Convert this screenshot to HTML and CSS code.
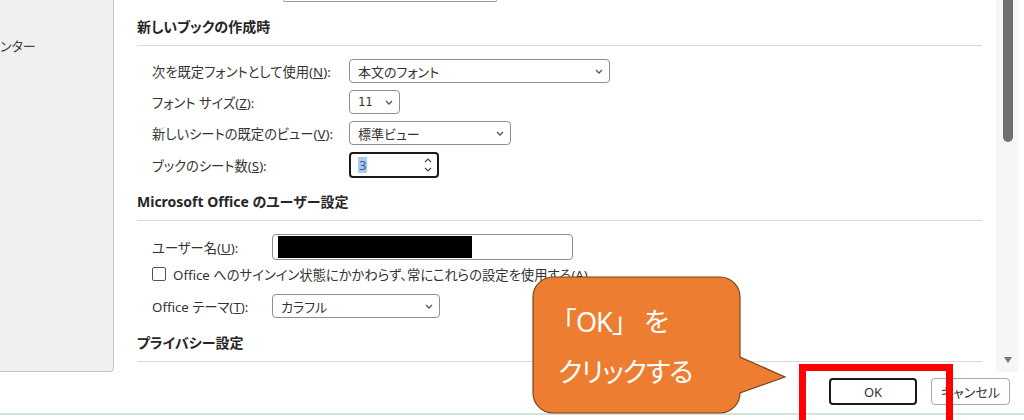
FILE: index.html
```html
<!DOCTYPE html>
<html lang="ja">
<head>
  <meta charset="UTF-8">
  <title>Excel のオプション</title>
  <link rel="stylesheet" href="styles.css">
</head>
<body>

  <!-- オプション画面 -->
  <div class="window">
    <aside class="nav">
      <div class="nav-item">ンター</div>
    </aside>

    <main class="content">
      <div class="prev-box"></div>

      <h3 class="section-title">新しいブックの作成時</h3>
      <div class="form form-book">
        <label class="label">次を既定フォントとして使用(<u>N</u>):</label>
        <div class="select w-font"><span>本文のフォント</span><svg class="chev" viewBox="0 0 8 5"><path d="M1 1l3 3 3-3"/></svg></div>

        <label class="label">フォント サイズ(<u>Z</u>):</label>
        <div class="select w-size"><span class="mono">11</span><svg class="chev" viewBox="0 0 8 5"><path d="M1 1l3 3 3-3"/></svg></div>

        <label class="label">新しいシートの既定のビュー(<u>V</u>):</label>
        <div class="select w-view"><span>標準ビュー</span><svg class="chev" viewBox="0 0 8 5"><path d="M1 1l3 3 3-3"/></svg></div>

        <label class="label">ブックのシート数(<u>S</u>):</label>
        <div class="spin">
          <span class="sel">3</span>
          <div class="spin-arrows">
            <svg viewBox="0 0 8 5"><path d="M1 4l3-3 3 3"/></svg>
            <svg viewBox="0 0 8 5"><path d="M1 1l3 3 3-3"/></svg>
          </div>
        </div>
      </div>

      <h3 class="section-title title-user">Microsoft Office のユーザー設定</h3>
      <div class="form form-user">
        <label class="label">ユーザー名(<u>U</u>):</label>
        <div class="textbox"><div class="redact"></div></div>

        <div class="check-row">
          <span class="checkbox"></span>
          <span>Office へのサインイン状態にかかわらず、常にこれらの設定を使用する(A)</span>
        </div>

        <label class="label row-theme">Office テーマ(<u>T</u>):</label>
        <div class="select w-theme row-theme"><span>カラフル</span><svg class="chev" viewBox="0 0 8 5"><path d="M1 1l3 3 3-3"/></svg></div>
      </div>

      <h3 class="section-title title-privacy">プライバシー設定</h3>
    </main>

    <div class="scrollbar">
      <div class="thumb"></div>
      <div class="arrow-down"></div>
    </div>
  </div>

  <div class="footer">
    <button class="btn btn-ok">OK</button>
    <button class="btn">キャンセル</button>
  </div>
  <div class="bottom-line"></div>

  <!-- 吹き出し -->
  <svg class="callout" width="260" height="142" viewBox="0 0 260 142">
    <path d="M21 1H188A20 20 0 0 1 208 21V81L253 101L208 117A20 20 0 0 1 188 137H21A20 20 0 0 1 1 117V21A20 20 0 0 1 21 1Z"/>
  </svg>
  <div class="callout-text"><span class="full">「OK」 を</span><br>クリックする</div>

  <div class="highlight"></div>

</body>
</html>
```

FILE: styles.css
```css
body {
  margin: 0;
  width: 1024px;
  height: 420px;
  overflow: hidden;
  position: relative;
  background: #fff;
  font-family: "Noto Sans", "Noto Sans CJK JP", sans-serif;
  font-feature-settings: "palt";
  font-size: 13px;
  color: #333;
}

/* ウィンドウ */
.window {
  display: flex;
  height: 372px;
}

.nav {
  width: 113px;
  height: 371px;
  background: #f0f0f0;
  border-right: 1px solid #c6c6c6;
  border-bottom: 1px solid #c6c6c6;
  border-bottom-right-radius: 4px;
  overflow: hidden;
}

.nav-item {
  margin-top: 36px;
  color: #444;
  white-space: nowrap;
}

.content {
  flex: 1;
  padding: 0 14px 0 23px;
  overflow: hidden;
}

.prev-box {
  margin-left: 146px;
  width: 212px;
  height: 1px;
  border: 1px solid #9a9a9a;
  border-top: none;
  border-radius: 0 0 4px 4px;
}

.section-title {
  margin: 15px 0 0;
  padding-bottom: 8px;
  border-bottom: 1px solid #d9d9d9;
  font-size: 14px;
  font-weight: bold;
  line-height: 20px;
  color: #262626;
}

.title-user { margin-top: 14px; }
.title-privacy { margin-top: 15px; }

/* フォーム */
.form {
  display: grid;
  align-items: center;
  padding-left: 15px;
  margin-top: 13px;
  row-gap: 7px;
}

.form-book { grid-template-columns: 197px auto; }
.form-user { grid-template-columns: 120px auto; row-gap: 5px; }

.label {
  white-space: nowrap;
  color: #333;
  font-size: 13.3px;
}

.select {
  display: flex;
  align-items: center;
  justify-content: space-between;
  box-sizing: border-box;
  height: 24px;
  padding: 0 6px 0 8px;
  border: 1px solid #8f8f8f;
  border-radius: 4px;
  background: #fff;
  color: #333;
}

.w-font { width: 261px; }
.w-size { width: 51px; }
.w-view { width: 162px; }
.w-theme { width: 168px; }

.mono {
  font-family: "DejaVu Sans Mono", monospace;
  font-size: 12px;
}

.chev {
  width: 8px;
  height: 5px;
  fill: none;
  stroke: #555;
  stroke-width: 1.3;
}

.spin {
  display: flex;
  align-items: center;
  justify-content: space-between;
  box-sizing: border-box;
  width: 90px;
  height: 26px;
  padding: 0 5px 0 7px;
  border: 2px solid #1a1a1a;
  border-radius: 4px;
}

.sel {
  background: #a9cdf0;
  color: #3a5a8a;
  padding: 0 1px;
  line-height: 16px;
}

.spin-arrows {
  display: flex;
  flex-direction: column;
  gap: 4px;
}

.spin-arrows svg {
  width: 8px;
  height: 5px;
  fill: none;
  stroke: #444;
  stroke-width: 1.2;
}

.textbox {
  box-sizing: border-box;
  width: 301px;
  height: 26px;
  padding: 1px 0 1px 5px;
  border: 1px solid #8f8f8f;
  border-radius: 4px;
}

.redact {
  width: 194px;
  height: 100%;
  background: #000;
}

.check-row {
  grid-column: 1 / 3;
  display: flex;
  align-items: center;
  gap: 7px;
  height: 18px;
  white-space: nowrap;
  font-size: 13.3px;
}

.checkbox {
  width: 12px;
  height: 12px;
  border: 1px solid #555;
  border-radius: 2px;
}

.row-theme { margin-top: 6px; }

/* スクロールバー */
.scrollbar {
  position: relative;
  width: 22px;
  margin-right: 6px;
  background: #f6f6f6;
}

.thumb {
  margin-left: 7px;
  width: 10px;
  height: 142px;
  background: #6f6f6f;
  border-radius: 0 0 5px 5px;
}

.arrow-down {
  position: absolute;
  left: 8px;
  top: 357px;
  border-left: 4px solid transparent;
  border-right: 4px solid transparent;
  border-top: 6px solid #7a7a7a;
}

/* ボタン */
.footer {
  display: flex;
  justify-content: flex-end;
  gap: 14px;
  height: 41px;
  padding: 6px 14px 0 0;
  box-sizing: border-box;
}

.btn {
  height: 27px;
  width: 79px;
  background: #fff;
  border: 1px solid #a8a8a8;
  border-radius: 4px;
  font-family: "Noto Sans", "Noto Sans CJK JP", sans-serif;
  font-feature-settings: "palt";
  font-size: 13px;
  color: #333;
}

.btn-ok {
  width: 88px;
  border: 2px solid #1a1a1a;
}

.bottom-line {
  height: 2px;
  background: #d3e5d9;
}

/* 注釈 */
.callout {
  position: absolute;
  left: 532px;
  top: 276px;
}

.callout path {
  fill: #ed7d31;
  stroke: #7d4418;
  stroke-width: 1.2;
}

.callout-text {
  position: absolute;
  left: 558px;
  top: 297px;
  color: #fff;
  font-size: 27px;
  line-height: 50px;
  letter-spacing: -1px;
  white-space: nowrap;
}

.callout-text .full {
  font-feature-settings: normal;
  margin-left: -8px;
}

.highlight {
  position: absolute;
  left: 799px;
  top: 364px;
  width: 140px;
  height: 49px;
  border: 7px solid #ff0000;
  border-bottom: none;
}
```
